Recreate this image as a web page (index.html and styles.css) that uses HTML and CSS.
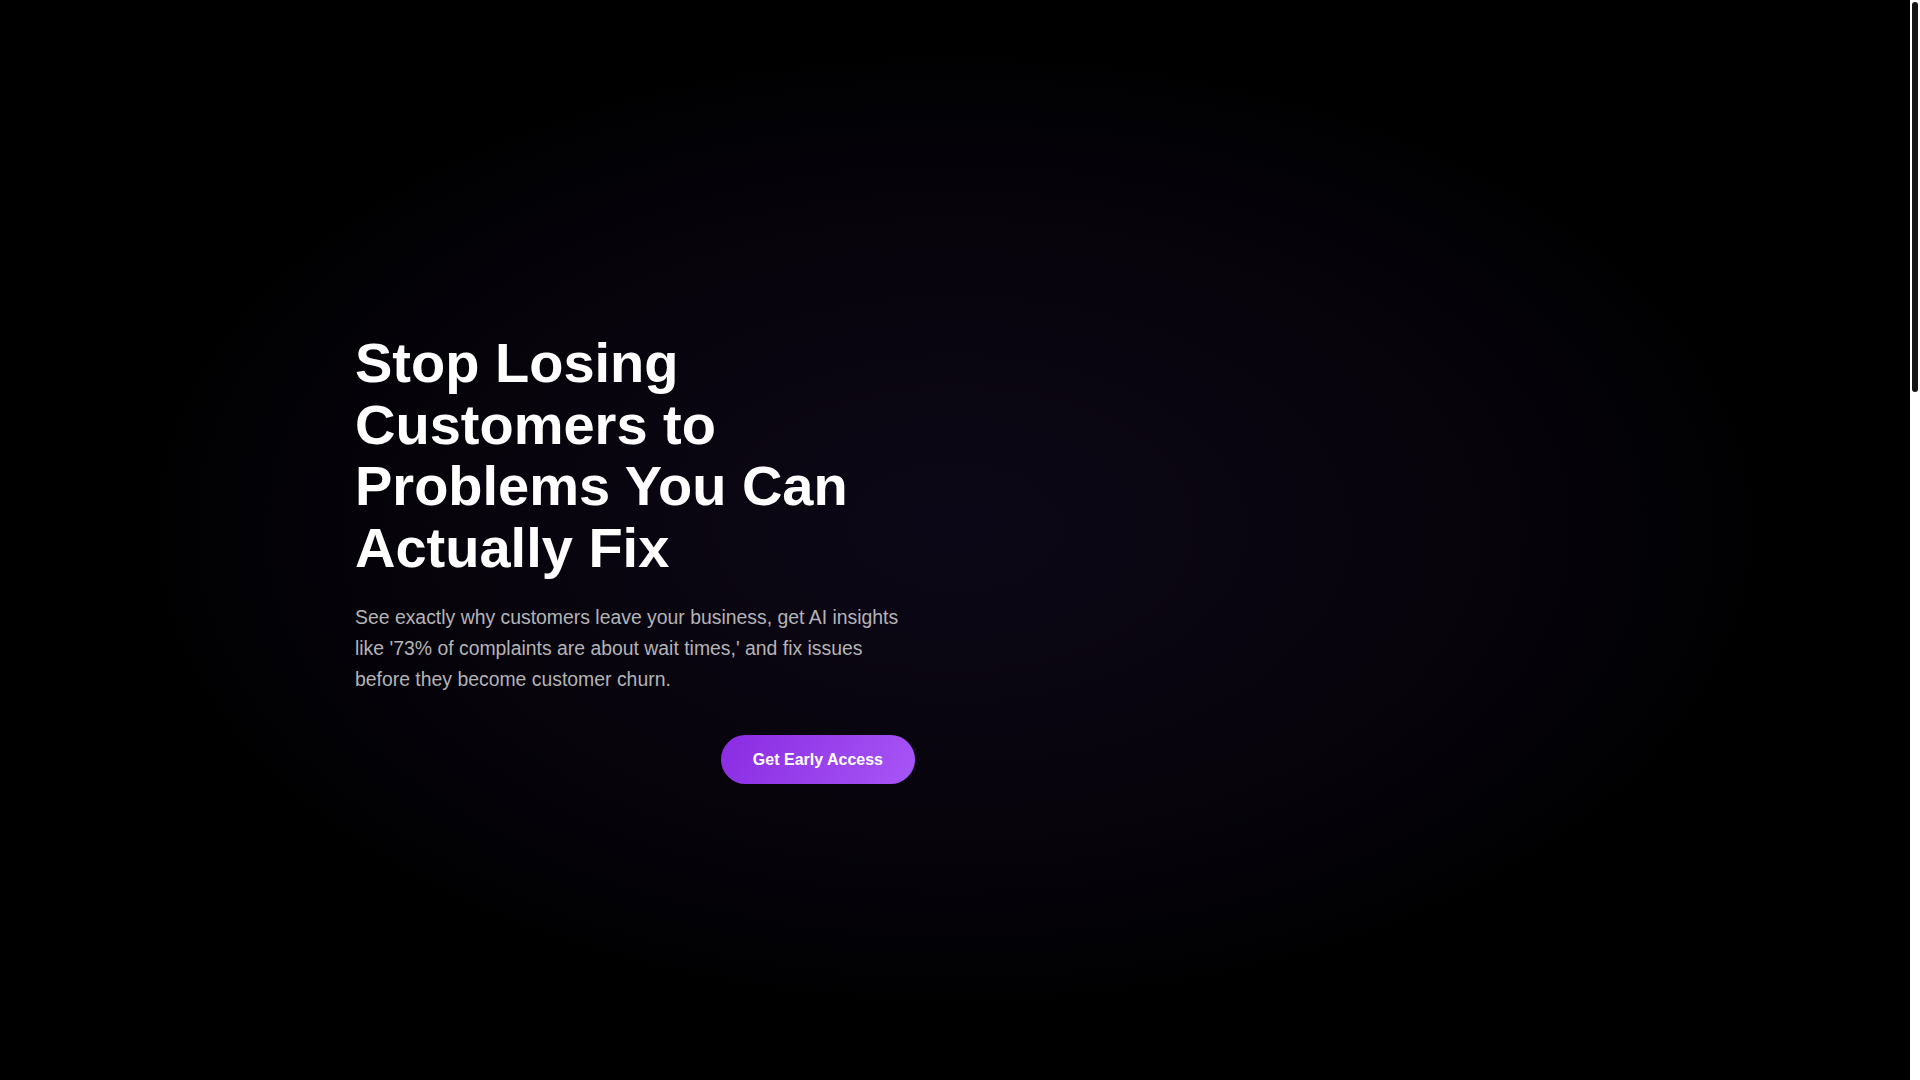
FILE: index.html
```html
<!DOCTYPE html>
<html lang="en">
<head>
<meta charset="utf-8">
<title>Stop Losing Customers</title>
<link rel="stylesheet" href="styles.css">
</head>
<body>
<main class="page">
  <section class="hero">
    <div class="container">
      <div class="hero-text">
        <h1 class="title">Stop Losing Customers to Problems You Can Actually Fix</h1>
        <p class="lead">See exactly why customers leave your business, get AI insights like '73% of complaints are about wait times,' and fix issues before they become customer churn.</p>
        <div class="cta-row">
          <a class="cta" href="#">Get Early Access</a>
        </div>
      </div>
      <div class="hero-visual"></div>
    </div>
  </section>
  <section class="below"></section>
</main>
<div class="scrollbar" aria-hidden="true"><div class="scrollbar-thumb"></div></div>
</body>
</html>
```
FILE: styles.css
```css
html, body {
  margin: 0;
  padding: 0;
  background: #000;
}
body {
  font-family: "Liberation Sans", Arial, sans-serif;
  color: #fff;
}
.page {
  margin-right: 10px;
}
.scrollbar {
  position: fixed;
  top: 0;
  right: 0;
  width: 10px;
  height: 100vh;
  background: #ffffff;
}
.scrollbar-thumb {
  position: absolute;
  top: 2px;
  left: 2px;
  width: 6px;
  height: 390px;
  border-radius: 3px;
  background: #141414;
}
.hero {
  height: 1080px;
  box-sizing: border-box;
  padding-top: 332px;
  background: radial-gradient(ellipse 44% 46% at 50% 49%, #0c0716 0%, #09050f 45%, #040208 75%, #000 100%);
}
.container {
  width: 1200px;
  margin: 0 auto;
  display: grid;
  grid-template-columns: 560px 560px;
  column-gap: 80px;
}
.title {
  margin: 0;
  font-size: 56px;
  line-height: 1.1;
  font-weight: 700;
  color: #fff;
}
.lead {
  margin: 24px 0 0;
  font-size: 19.4px;
  line-height: 31px;
  color: #b4b4b8;
}
.cta-row {
  margin-top: 40px;
  display: flex;
  justify-content: flex-end;
}
.cta {
  display: inline-block;
  padding: 15px 32px;
  border-radius: 999px;
  background: linear-gradient(120deg, #8a2be2 0%, #9b45ee 60%, #a855f7 100%);
  color: #fff;
  font-size: 16px;
  line-height: 19px;
  font-weight: 700;
  text-decoration: none;
}
.below {
  height: 1900px;
  background: #000;
}
```
